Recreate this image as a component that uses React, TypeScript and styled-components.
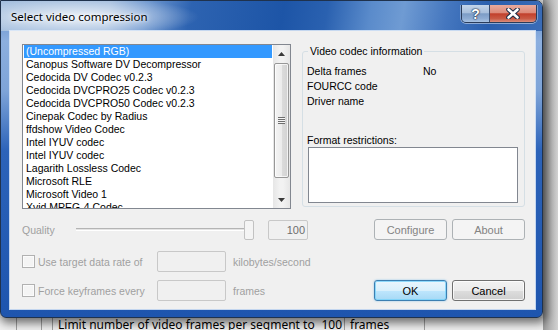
import styled, { createGlobalStyle } from "styled-components";

const GlobalStyle = createGlobalStyle`
  html, body { margin: 0; padding: 0; }
  *, *::before, *::after { box-sizing: border-box; }
  body { font-family: "Liberation Sans", Arial, sans-serif; }
`;

const Screen = styled.div`
  width: 558px;
  height: 330px;
  overflow: hidden;
  display: grid;
  grid-template-columns: 543px 15px;
  grid-template-rows: 318px 12px;
  background: #e9e9e9;
`;

const Window = styled.div`
  grid-column: 1;
  grid-row: 1;
  z-index: 2;
  display: flex;
  flex-direction: column;
  border: 1px solid #1f324d;
  border-radius: 0 7px 6px 6px;
  box-shadow: 2px 3px 10px 2px rgba(0, 0, 0, 0.55);
  background: linear-gradient(
    180deg,
    #5584c6 0px,
    #8cafdf 40px,
    #7ea4d8 90px,
    #2c63b9 150px,
    #1e55ae 100%
  );
`;

const TitleBar = styled.div`
  height: 30px;
  display: flex;
  align-items: flex-start;
  border-radius: 0 6px 0 0;
  background:
    radial-gradient(ellipse 120px 20px at 78px 16px, rgba(255, 255, 255, 0.8), rgba(255, 255, 255, 0) 100%),
    linear-gradient(
      100deg,
      #a3bede 0%,
      #9db9dc 20%,
      #6e97cf 27%,
      #2d63b1 35%,
      #1d55a7 52%,
      #2a61b0 60%,
      #5a8bcb 68%,
      #6f9bd3 74%,
      #4577bf 82%,
      #2a5fae 90%,
      #3a6cb7 100%
    );
`;

const Title = styled.span`
  flex: 1;
  padding: 8px 0 0 10px;
  font-family: "Noto Sans", "Liberation Sans", sans-serif;
  font-size: 11.5px;
  line-height: 16px;
  color: #000;
  text-shadow: 0 0 6px #fff, 0 0 3px #fff;
`;

const CaptionGroup = styled.div`
  display: flex;
  margin: 4px 5px 0 0;
  height: 18px;
  border: 1px solid #2a3c5a;
  border-top: none;
  border-radius: 0 0 5px 5px;
  overflow: hidden;
  box-shadow: 0 1px 0 rgba(255, 255, 255, 0.45), 1px 0 0 rgba(255, 255, 255, 0.35), -1px 0 0 rgba(255, 255, 255, 0.35);
`;

const CaptionButton = styled.div<{ $close?: boolean }>`
  width: ${(p) => (p.$close ? 47 : 27)}px;
  display: flex;
  align-items: center;
  justify-content: center;
  border-left: ${(p) => (p.$close ? "1px solid #3b4f72" : "none")};
  background: ${(p) =>
    p.$close
      ? "linear-gradient(180deg, #e8aa9d 0%, #dc8a7a 45%, #c2402c 52%, #c85a45 80%, #dc8e7c 100%)"
      : "linear-gradient(180deg, #c4d5ea 0%, #a8bfdc 45%, #7c9cc6 52%, #8eacd3 80%, #a9c3e3 100%)"};
  font-family: "Liberation Sans", Arial, sans-serif;
  font-weight: bold;
  font-size: 14px;
  color: #fff;
  text-shadow: 0 0 1px #1b2b45, 0 0 1px #1b2b45, 0 0 2px #1b2b45;
`;

const Frame = styled.div`
  flex: 1;
  padding: 0 7px 8px 9px;
`;

const Client = styled.div`
  height: 278px;
  background: #f0f0f0;
  box-shadow: 0 0 0 1px rgba(225, 236, 250, 0.85);
  padding: 13px 10px 8px 12px;
  display: flex;
  flex-direction: column;
  font-size: 10.5px;
  color: #000;
`;

const TopSection = styled.div`
  display: flex;
  gap: 11px;
`;

const ListBox = styled.div`
  width: 269px;
  height: 165px;
  border: 1px solid #828790;
  background: #fff;
  display: flex;
`;

const List = styled.div`
  flex: 1;
  padding: 0 1px 0 1px;
  overflow: hidden;
`;

const ListItem = styled.div<{ $selected?: boolean }>`
  height: 13px;
  line-height: 13px;
  padding-left: 2px;
  white-space: nowrap;
  background: ${(p) => (p.$selected ? "#3399ff" : "transparent")};
  color: ${(p) => (p.$selected ? "#fff" : "#000")};
`;

const ScrollBar = styled.div`
  width: 17px;
  display: flex;
  flex-direction: column;
  background: linear-gradient(90deg, #e6e6e6, #f2f2f2 40%, #f2f2f2 60%, #e6e6e6);
`;

const ScrollArrow = styled.div`
  height: 17px;
  display: flex;
  align-items: center;
  justify-content: center;
`;

const ScrollTrack = styled.div`
  flex: 1;
  padding: 1px 1px 0 1px;
`;

const Thumb = styled.div`
  height: 115px;
  border: 1px solid #979797;
  border-radius: 2px;
  background: linear-gradient(90deg, #f4f4f4 0%, #ececec 50%, #dcdcdc 51%, #d2d2d2 100%);
  box-shadow: inset 0 0 0 1px rgba(255, 255, 255, 0.7);
  display: flex;
  align-items: center;
  justify-content: center;
`;

const Grip = styled.div`
  width: 7px;
  height: 7px;
  background: repeating-linear-gradient(180deg, #6e6e6e 0 1px, #f4f4f4 1px 2px);
`;

const Group = styled.div`
  position: relative;
  width: 223px;
  height: 156px;
  margin-top: 7px;
  border: 1px solid #d5dfe5;
  border-radius: 3px;
  padding: 12px 5px 3px 4px;
  display: flex;
  flex-direction: column;
`;

const GroupTitle = styled.span`
  position: absolute;
  top: -7px;
  left: 5px;
  padding: 0 2px;
  line-height: 13px;
  background: #f0f0f0;
`;

const InfoGrid = styled.div`
  display: grid;
  grid-template-columns: 116px 1fr;
  line-height: 15px;
`;

const Spacer = styled.div`
  flex: 1;
`;

const FieldLabel = styled.div`
  line-height: 13px;
`;

const FormatBox = styled.div`
  width: 210px;
  height: 56px;
  margin-left: 1px;
  border: 1px solid #828790;
  background: #fff;
`;

const Row = styled.div<{ $gap: number }>`
  display: flex;
  align-items: center;
  height: 21px;
  margin-top: ${(p) => p.$gap}px;
  color: #a0a0a0;
`;

const QualityLabel = styled.span`
  width: 54px;
`;

const Slider = styled.div`
  position: relative;
  width: 178px;
  height: 21px;
  display: flex;
  align-items: center;

  &::before {
    content: "";
    position: absolute;
    left: 0;
    right: 1px;
    top: 9px;
    height: 3px;
    border-top: 1px solid #b4b4b4;
    border-bottom: 1px solid #fff;
    background: #e3e3e3;
  }
`;

const SliderThumb = styled.div`
  position: relative;
  margin-left: auto;
  width: 10px;
  height: 20px;
  border: 1px solid #c2c2c2;
  border-radius: 2px;
  background: #f4f4f4;
`;

const TextBox = styled.div<{ $width: number }>`
  flex: none;
  width: ${(p) => p.$width}px;
  height: 21px;
  border: 1px solid #c8c8c8;
  border-radius: 2px;
  background: #f0f0f0;
  display: flex;
  align-items: center;
  justify-content: flex-end;
  padding-right: 2px;
  color: #6d6d6d;
`;

const ValueBox = styled(TextBox)`
  height: 20px;
  margin-left: 14px;
  font-size: 11px;
`;

const ButtonGroup = styled.div`
  margin-left: auto;
  display: flex;
  gap: 5px;
`;

const Button = styled.div<{ $variant: "disabled" | "default" | "normal" }>`
  width: 73px;
  height: 21px;
  border-radius: 3px;
  display: flex;
  align-items: center;
  justify-content: center;
  font-size: 11px;
  border: 1px solid
    ${(p) => (p.$variant === "disabled" ? "#adb2b5" : p.$variant === "default" ? "#3c7fb1" : "#707070")};
  color: ${(p) => (p.$variant === "disabled" ? "#838383" : "#000")};
  background: ${(p) =>
    p.$variant === "disabled"
      ? "#f4f4f4"
      : p.$variant === "default"
        ? "linear-gradient(180deg, #eaf6fd 0%, #d9f0fc 50%, #bee6fd 51%, #a7d9f5 100%)"
        : "linear-gradient(180deg, #f2f2f2 0%, #ebebeb 50%, #dddddd 51%, #cfcfcf 100%)"};
  box-shadow: ${(p) =>
    p.$variant === "default"
      ? "inset 0 0 0 1px rgba(120, 210, 250, 0.8), 0 0 2px rgba(60, 160, 230, 0.6)"
      : p.$variant === "normal"
        ? "inset 0 0 0 1px rgba(255, 255, 255, 0.75)"
        : "none"};
`;

const CheckLabel = styled.label`
  flex: none;
  width: 135px;
  display: flex;
  align-items: center;
  gap: 3px;
  font-size: 10.5px;
  white-space: nowrap;
`;

const CheckBox = styled.span`
  flex: none;
  width: 13px;
  height: 13px;
  border: 1px solid #b1b1b1;
  background: #f4f4f4;
  box-shadow: inset 0 0 0 1px #fbfbfb;
`;

const Unit = styled.span`
  margin-left: 7px;
  font-size: 10.5px;
`;

const BackRight = styled.div`
  grid-column: 2;
  grid-row: 1 / span 2;
  background: linear-gradient(90deg, #9a9a9a 0%, #b8b8b8 50%, #d2d2d2 100%);
`;

const BackRow = styled.div`
  grid-column: 1;
  grid-row: 2;
  display: flex;
  background: #f0f0f0;
  font-family: "Noto Sans", "Liberation Sans", sans-serif;
  font-size: 12px;
  line-height: 14px;
`;

const BackCell = styled.div<{ $width: number }>`
  width: ${(p) => p.$width}px;
  border-right: 1px solid #a0a0a0;
  display: flex;
  justify-content: space-between;
  padding: 0 2px 0 5px;
  white-space: nowrap;
  overflow: hidden;
`;

const codecs = [
  "(Uncompressed RGB)",
  "Canopus Software DV Decompressor",
  "Cedocida DV Codec v0.2.3",
  "Cedocida DVCPRO25 Codec v0.2.3",
  "Cedocida DVCPRO50 Codec v0.2.3",
  "Cinepak Codec by Radius",
  "ffdshow Video Codec",
  "Intel IYUV codec",
  "Intel IYUV codec",
  "Lagarith Lossless Codec",
  "Microsoft RLE",
  "Microsoft Video 1",
  "Xvid MPEG-4 Codec",
];

const Arrow = ({ up }: { up?: boolean }) => (
  <svg width="7" height="4" viewBox="0 0 7 4">
    <path d={up ? "M0 4 L3.5 0 L7 4 Z" : "M0 0 L3.5 4 L7 0 Z"} fill="#3a3a3a" />
  </svg>
);

const CloseGlyph = () => (
  <svg width="14" height="11" viewBox="0 0 14 11">
    <path d="M2.5 1.5 L11.5 9.5 M11.5 1.5 L2.5 9.5" stroke="#1b2b45" strokeWidth="4.6" strokeLinecap="round" />
    <path d="M2.5 1.5 L11.5 9.5 M11.5 1.5 L2.5 9.5" stroke="#fff" strokeWidth="2.6" strokeLinecap="round" />
  </svg>
);

export default function App() {
  return (
    <>
      <GlobalStyle />
      <Screen>
        <Window>
          <TitleBar>
            <Title>Select video compression</Title>
            <CaptionGroup>
              <CaptionButton>?</CaptionButton>
              <CaptionButton $close>
                <CloseGlyph />
              </CaptionButton>
            </CaptionGroup>
          </TitleBar>
          <Frame>
            <Client>
              <TopSection>
                <ListBox>
                  <List>
                    {codecs.map((c, i) => (
                      <ListItem key={i} $selected={i === 0}>
                        {c}
                      </ListItem>
                    ))}
                  </List>
                  <ScrollBar>
                    <ScrollArrow>
                      <Arrow up />
                    </ScrollArrow>
                    <ScrollTrack>
                      <Thumb>
                        <Grip />
                      </Thumb>
                    </ScrollTrack>
                    <ScrollArrow>
                      <Arrow />
                    </ScrollArrow>
                  </ScrollBar>
                </ListBox>
                <Group>
                  <GroupTitle>Video codec information</GroupTitle>
                  <InfoGrid>
                    <span>Delta frames</span>
                    <span>No</span>
                    <span>FOURCC code</span>
                    <span></span>
                    <span>Driver name</span>
                    <span></span>
                  </InfoGrid>
                  <Spacer />
                  <FieldLabel>Format restrictions:</FieldLabel>
                  <FormatBox />
                </Group>
              </TopSection>

              <Row $gap={10}>
                <QualityLabel>Quality</QualityLabel>
                <Slider>
                  <SliderThumb />
                </Slider>
                <ValueBox $width={40}>100</ValueBox>
                <ButtonGroup>
                  <Button $variant="disabled">Configure</Button>
                  <Button $variant="disabled">About</Button>
                </ButtonGroup>
              </Row>

              <Row $gap={11}>
                <CheckLabel>
                  <CheckBox />
                  Use target data rate of
                </CheckLabel>
                <TextBox $width={69} />
                <Unit>kilobytes/second</Unit>
              </Row>

              <Row $gap={8}>
                <CheckLabel>
                  <CheckBox />
                  Force keyframes every
                </CheckLabel>
                <TextBox $width={69} />
                <Unit>frames</Unit>
                <ButtonGroup>
                  <Button $variant="default">OK</Button>
                  <Button $variant="normal">Cancel</Button>
                </ButtonGroup>
              </Row>
            </Client>
          </Frame>
        </Window>
        <BackRight />
        <BackRow>
          <BackCell $width={17} />
          <BackCell $width={25} />
          <BackCell $width={11} />
          <BackCell $width={292}>
            <span>Limit number of video frames per segment to</span>
            <span>100</span>
          </BackCell>
          <BackCell $width={80}>frames</BackCell>
        </BackRow>
      </Screen>
    </>
  );
}
